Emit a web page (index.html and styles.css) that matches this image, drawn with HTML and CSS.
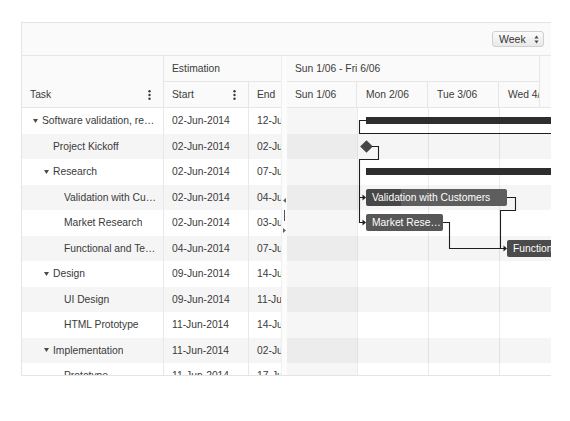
FILE: index.html
```html
<!DOCTYPE html>
<html>
<head>
<meta charset="utf-8">
<link rel="stylesheet" href="styles.css">
</head>
<body>
<div class="page">
  <div class="gantt">
    <div class="toolbar">
      <div class="view-select">
        <span>Week</span>
        <svg class="sel-arrows" width="5" height="9" viewBox="0 0 5 9"><path d="M2.5 0.5 L4.6 3.6 H0.4 Z M2.5 8.5 L4.6 5.4 H0.4 Z" fill="#4a4a4a"/></svg>
      </div>
    </div>
    <div class="main">
      <div class="grid">
        <div class="grid-head">
          <div class="hcell task-h">
            <div class="hrow"><span>Task</span><svg class="kebab" width="3" height="10" viewBox="0 0 3 10"><circle cx="1.5" cy="1.3" r="1.2"/><circle cx="1.5" cy="5" r="1.2"/><circle cx="1.5" cy="8.7" r="1.2"/></svg></div>
          </div>
          <div class="hcell est-h">Estimation</div>
          <div class="hcell start-h"><span>Start</span><svg class="kebab" width="3" height="10" viewBox="0 0 3 10"><circle cx="1.5" cy="1.3" r="1.2"/><circle cx="1.5" cy="5" r="1.2"/><circle cx="1.5" cy="8.7" r="1.2"/></svg></div>
          <div class="hcell end-h">End</div>
        </div>
        <div class="grid-body">
          <div class="grow"><div class="gcell task"><span class="slot"><svg class="exp" width="5" height="4" viewBox="0 0 5 4"><path d="M0 0 H5 L2.5 4 Z"/></svg></span><span class="txt">Software validation, research and implementation</span></div><div class="gcell">02-Jun-2014</div><div class="gcell">12-Jul-2014</div></div>
          <div class="grow"><div class="gcell task lvl1"><span class="slot"></span><span class="txt">Project Kickoff</span></div><div class="gcell">02-Jun-2014</div><div class="gcell">02-Jun-2014</div></div>
          <div class="grow"><div class="gcell task lvl1"><span class="slot"><svg class="exp" width="5" height="4" viewBox="0 0 5 4"><path d="M0 0 H5 L2.5 4 Z"/></svg></span><span class="txt">Research</span></div><div class="gcell">02-Jun-2014</div><div class="gcell">07-Jun-2014</div></div>
          <div class="grow"><div class="gcell task lvl2"><span class="slot"></span><span class="txt">Validation with Customers</span></div><div class="gcell">02-Jun-2014</div><div class="gcell">04-Jun-2014</div></div>
          <div class="grow"><div class="gcell task lvl2"><span class="slot"></span><span class="txt">Market Research</span></div><div class="gcell">02-Jun-2014</div><div class="gcell">03-Jun-2014</div></div>
          <div class="grow"><div class="gcell task lvl2"><span class="slot"></span><span class="txt">Functional and Technical Specification</span></div><div class="gcell">04-Jun-2014</div><div class="gcell">07-Jun-2014</div></div>
          <div class="grow"><div class="gcell task lvl1"><span class="slot"><svg class="exp" width="5" height="4" viewBox="0 0 5 4"><path d="M0 0 H5 L2.5 4 Z"/></svg></span><span class="txt">Design</span></div><div class="gcell">09-Jun-2014</div><div class="gcell">14-Jun-2014</div></div>
          <div class="grow"><div class="gcell task lvl2"><span class="slot"></span><span class="txt">UI Design</span></div><div class="gcell">09-Jun-2014</div><div class="gcell">11-Jun-2014</div></div>
          <div class="grow"><div class="gcell task lvl2"><span class="slot"></span><span class="txt">HTML Prototype</span></div><div class="gcell">11-Jun-2014</div><div class="gcell">14-Jun-2014</div></div>
          <div class="grow"><div class="gcell task lvl1"><span class="slot"><svg class="exp" width="5" height="4" viewBox="0 0 5 4"><path d="M0 0 H5 L2.5 4 Z"/></svg></span><span class="txt">Implementation</span></div><div class="gcell">11-Jun-2014</div><div class="gcell">02-Jul-2014</div></div>
          <div class="grow"><div class="gcell task lvl2"><span class="slot"></span><span class="txt">Prototype</span></div><div class="gcell">11-Jun-2014</div><div class="gcell">17-Jun-2014</div></div>
        </div>
      </div>
      <div class="splitter">
        <svg class="split-arrow" width="3" height="5" viewBox="0 0 3 5"><path d="M3 0 V5 L0 2.5 Z"/></svg>
        <div class="split-handle"></div>
        <svg class="split-arrow" width="3" height="5" viewBox="0 0 3 5"><path d="M0 0 V5 L3 2.5 Z"/></svg>
      </div>
      <div class="timeline">
        <div class="tl-head">
          <div class="tl-head-rows">
            <div class="tl-range">Sun 1/06 - Fri 6/06</div>
            <div class="tl-days">
              <div class="tl-day">Sun 1/06</div>
              <div class="tl-day">Mon 2/06</div>
              <div class="tl-day">Tue 3/06</div>
              <div class="tl-day">Wed 4/06</div>
            </div>
          </div>
          <div class="tl-gutter"></div>
        </div>
        <div class="tl-body">
          <div class="trows">
            <div class="trow"><div class="sbar" style="margin-left:79px;width:300px"></div></div>
            <div class="trow"><div class="milestone" style="margin-left:75px"></div></div>
            <div class="trow"><div class="sbar" style="margin-left:79px;width:300px"></div></div>
            <div class="trow"><div class="tbar" style="margin-left:79px;width:141px;background:linear-gradient(to right,#474747 35px,#5e5e5e 35px)">Validation with Customers</div></div>
            <div class="trow"><div class="tbar" style="margin-left:79px;width:77px">Market Research</div></div>
            <div class="trow"><div class="tbar dark" style="margin-left:220px;width:200px">Functional and Technical Specification</div></div>
            <div class="trow"></div>
            <div class="trow"></div>
            <div class="trow"></div>
            <div class="trow"></div>
            <div class="trow"></div>
          </div>
          <svg class="links" width="264" height="270" viewBox="0 0 264 270">
            <path d="M79 12.5 H72.5 V25.5 H264"/>
            <path d="M85 38.5 H91.5 V51.5 H72.5 V89.5 H76"/>
            <path d="M72.5 89.5 V114.5 H76"/>
            <path d="M220 89.5 H228.5 V102.5 H213.5 V140.5 H217"/>
            <path d="M156 114.5 H162.5 V140.5 H217"/>
            <path class="head" d="M75.5 86.5 L79 89.5 L75.5 92.5 Z"/>
            <path class="head" d="M75.5 111.5 L79 114.5 L75.5 117.5 Z"/>
            <path class="head" d="M216.5 137.5 L220 140.5 L216.5 143.5 Z"/>
          </svg>
        </div>
      </div>
    </div>
  </div>
</div>
</body>
</html>
```

FILE: styles.css
```css
* { box-sizing: border-box; }

body {
  margin: 0;
  background: #ffffff;
  font-family: "Liberation Sans", Arial, sans-serif;
  font-size: 10.3px;
  color: #3a3a3a;
}

.page {
  padding: 22px 0 0 21px;
}

.gantt {
  width: 530px;
  height: 354px;
  border: 1px solid #e4e4e4;
  border-right: none;
  display: flex;
  flex-direction: column;
  overflow: hidden;
}

/* toolbar */
.toolbar {
  height: 33px;
  flex: none;
  background: #fafafa;
  border-bottom: 1px solid #e6e6e6;
  display: flex;
  justify-content: flex-end;
  align-items: center;
  padding-right: 7px;
}

.view-select {
  width: 52px;
  height: 16px;
  border: 1px solid #cfcfcf;
  border-radius: 3px;
  background: linear-gradient(#fbfbfb, #e9e9e9);
  display: flex;
  align-items: center;
  justify-content: space-between;
  padding: 0 4px 0 6px;
  font-size: 10.5px;
  color: #333;
}

.main {
  flex: 1;
  min-height: 0;
  display: flex;
}

/* left grid */
.grid {
  width: 259px;
  flex: none;
  display: flex;
  flex-direction: column;
  overflow: hidden;
}

.grid-head {
  flex: none;
  display: grid;
  grid-template-columns: 142px 85px 85px;
  grid-template-rows: 26px 25px;
  height: 52px;
  background: #fafafa;
  border-bottom: 1px solid #e6e6e6;
}

.hcell {
  padding: 0 8px;
  display: flex;
  align-items: center;
  white-space: nowrap;
}

.task-h {
  grid-row: 1 / 3;
  grid-column: 1;
  border-right: 1px solid #e6e6e6;
  align-items: flex-end;
  padding: 0;
}

.hrow {
  width: 100%;
  height: 25px;
  display: flex;
  align-items: center;
  justify-content: space-between;
  padding: 0 12px 0 8px;
}

.est-h {
  grid-row: 1;
  grid-column: 2 / 4;
  border-bottom: 1px solid #e6e6e6;
}

.start-h {
  grid-row: 2;
  grid-column: 2;
  border-right: 1px solid #e6e6e6;
  justify-content: space-between;
  padding-right: 12px;
}

.end-h {
  grid-row: 2;
  grid-column: 3;
}

.kebab {
  fill: #3a3a3a;
  display: block;
}

.grid-body {
  flex: 1;
  overflow: hidden;
}

.grow {
  height: 25.5px;
  display: grid;
  grid-template-columns: 142px 85px 85px;
}

.grow:nth-child(even) {
  background: #f5f5f5;
}

.gcell {
  display: flex;
  align-items: center;
  padding: 0 8px;
  white-space: nowrap;
  overflow: hidden;
  border-right: 1px solid #e8e8e8;
  color: #3a3a3a;
}

.gcell:last-child {
  border-right: none;
}

.gcell.task {
  padding: 0 4px 0 9px;
}

.gcell.lvl1 { padding-left: 20px; }
.gcell.lvl2 { padding-left: 31px; }

.slot {
  width: 11px;
  flex: none;
  display: flex;
  align-items: center;
}

.exp {
  display: block;
  margin-left: 2px;
  fill: #4a4a4a;
}

.txt {
  overflow: hidden;
  text-overflow: ellipsis;
  min-width: 0;
}

/* splitter */
.splitter {
  width: 6px;
  flex: none;
  background: #fcfcfc;
  border-left: 1px solid #efefef;
  display: flex;
  flex-direction: column;
  align-items: center;
  justify-content: center;
  gap: 7px;
}

.split-arrow {
  display: block;
  fill: #666;
}

.split-handle {
  width: 1.5px;
  height: 11px;
  background: #555;
}

/* timeline */
.timeline {
  flex: 1;
  min-width: 0;
  display: flex;
  flex-direction: column;
  overflow: hidden;
}

.tl-head {
  flex: none;
  height: 52px;
  display: flex;
  background: #fafafa;
  border-bottom: 1px solid #e6e6e6;
}

.tl-head-rows {
  width: 252px;
  flex: none;
  overflow: hidden;
}

.tl-range {
  height: 26px;
  border-bottom: 1px solid #e6e6e6;
  display: flex;
  align-items: center;
  padding-left: 8px;
  white-space: nowrap;
}

.tl-days {
  height: 25px;
  display: flex;
}

.tl-day {
  width: 71px;
  flex: none;
  border-right: 1px solid #e6e6e6;
  display: flex;
  align-items: center;
  padding-left: 9px;
  white-space: nowrap;
}

.tl-day:first-child {
  width: 70px;
  padding-left: 8px;
}

.tl-gutter {
  flex: 1;
  border-left: 1px solid #e6e6e6;
}

.tl-body {
  flex: 1;
  position: relative;
  overflow: hidden;
  background:
    linear-gradient(to right, rgba(0, 0, 0, 0.035) 0 70px, transparent 70px),
    repeating-linear-gradient(to right, transparent 0 70px, #ebebeb 70px 71px);
}

.trow {
  height: 25.5px;
  display: flex;
  align-items: center;
}

.trow:nth-child(even) {
  background: rgba(0, 0, 0, 0.04);
}

.sbar {
  flex: none;
  height: 7px;
  background: #2e2e2e;
}

.milestone {
  flex: none;
  width: 9px;
  height: 9px;
  background: #464646;
  transform: rotate(45deg);
}

.tbar {
  flex: none;
  height: 17px;
  line-height: 17px;
  border-radius: 2px;
  background: #575757;
  color: #ffffff;
  padding: 0 2px 0 6px;
  white-space: nowrap;
  overflow: hidden;
  text-overflow: ellipsis;
}

.tbar.dark {
  background: #4b4b4b;
}

.links {
  position: absolute;
  left: 0;
  top: 0;
  fill: none;
  stroke: #1e1e1e;
  stroke-width: 1.1;
}

.links .head {
  fill: #1e1e1e;
  stroke: none;
}
```
